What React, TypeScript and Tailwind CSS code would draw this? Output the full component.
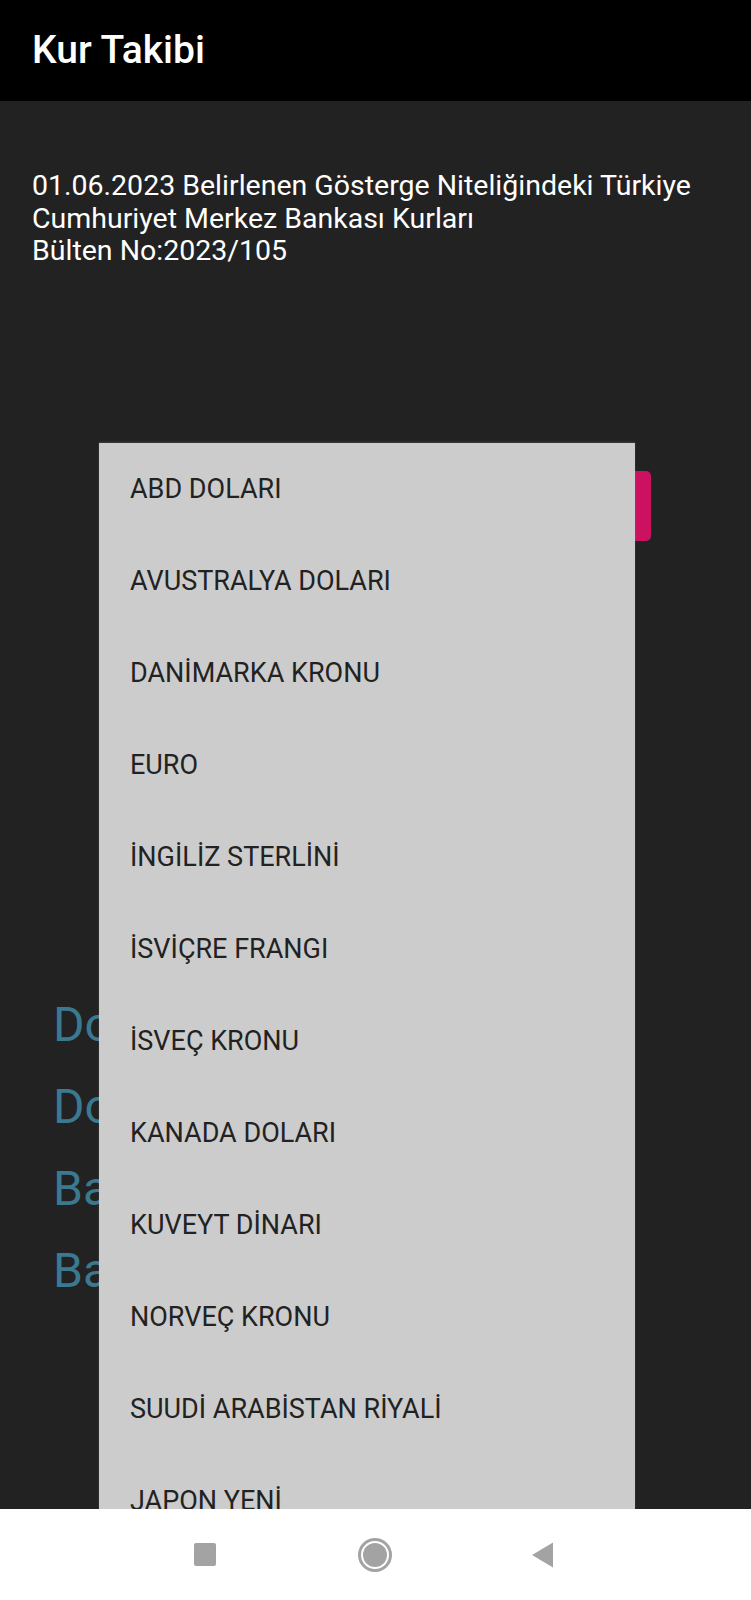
import React from 'react';

const currencies = [
  'ABD DOLARI',
  'AVUSTRALYA DOLARI',
  'DANİMARKA KRONU',
  'EURO',
  'İNGİLİZ STERLİNİ',
  'İSVİÇRE FRANGI',
  'İSVEÇ KRONU',
  'KANADA DOLARI',
  'KUVEYT DİNARI',
  'NORVEÇ KRONU',
  'SUUDİ ARABİSTAN RİYALİ',
  'JAPON YENİ',
];

const rateLabels = ['Dolar Alış: 19,1234', 'Dolar Satış: 19,4567', 'Banknot Alış: 19,1100', 'Banknot Satış: 19,4800'];

export default function App() {
  return (
    <div className="relative flex h-[1600px] w-[751px] flex-col overflow-hidden bg-[#222222] font-['Roboto',sans-serif]">
      {/* app bar */}
      <div className="flex h-[101px] shrink-0 items-center bg-black px-8">
        <h1 className="text-[39px] font-medium leading-none text-white">Kur Takibi</h1>
      </div>

      {/* content */}
      <div className="flex flex-1 flex-col overflow-hidden px-8">
        <p className="mt-[69px] text-[28.5px] leading-[32.6px] whitespace-nowrap text-white">
          01.06.2023 Belirlenen Gösterge Niteliğindeki Türkiye
          <br />
          Cumhuriyet Merkez Bankası Kurları
          <br />
          Bülten No:2023/105
        </p>

        <div className="mt-[203px] ml-[68px] h-[70px] w-[551px] rounded-[5px] bg-[#cc1160]" />

        <div className="mt-[443px] ml-[21px] flex flex-col">
          {rateLabels.map((label) => (
            <span key={label} className="h-[82px] text-[48px] leading-[82px] whitespace-nowrap text-[#3b7990]">
              {label}
            </span>
          ))}
        </div>
      </div>

      {/* navigation bar */}
      <div className="relative z-20 flex h-[91px] shrink-0 items-center bg-white pl-[194px]">
        <div className="h-[23px] w-[22px] rounded-[2px] bg-[#a3a3a3]" />
        <div className="ml-[142px] flex h-[34px] w-[34px] items-center justify-center rounded-full border-[3px] border-[#a3a3a3]">
          <div className="h-[24px] w-[24px] rounded-full bg-[#a3a3a3]" />
        </div>
        <svg className="ml-[139px]" width="23" height="26" viewBox="0 0 23 26">
          <path d="M22 0.5 L22 25.5 L1 13 Z" fill="#a3a3a3" strokeLinejoin="round" />
        </svg>
      </div>

      {/* spinner dropdown */}
      <div className="absolute top-[443px] left-[99px] z-10 h-[1066px] w-[536px] overflow-hidden bg-[#cccccc] shadow-[0_-1px_2px_rgba(255,255,255,0.15)]">
        {currencies.map((c) => (
          <div key={c} className="flex h-[92px] shrink-0 items-center pl-[31px] text-[27px] leading-none text-[#222222]">
            {c}
          </div>
        ))}
      </div>
    </div>
  );
}
